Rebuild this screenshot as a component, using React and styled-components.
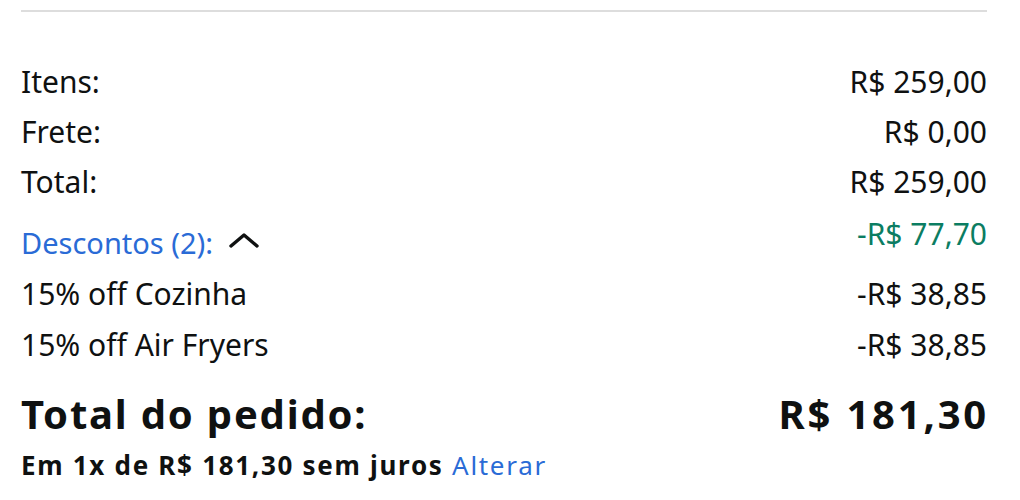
import React from "react";
import styled, { createGlobalStyle } from "styled-components";

const GlobalStyle = createGlobalStyle`
  body {
    margin: 0;
    background: #fff;
    font-family: "Noto Sans", "Open Sans", Arial, sans-serif;
    color: #0f1111;
  }
`;

const Summary = styled.div`
  padding: 10px 33px 0 21px;
`;

const Divider = styled.hr`
  border: 0;
  border-top: 2px solid #dddddd;
  margin: 0 0 45px;
`;

const Row = styled.div`
  display: flex;
  justify-content: space-between;
  align-items: flex-start;
  height: ${({ $h }) => $h || 50}px;
  font-size: 30px;
  line-height: ${({ $h }) => $h || 50}px;
`;

const Label = styled.span`
  display: flex;
  align-items: center;
  padding-top: ${({ $shift }) => $shift || 0}px;
`;

const LinkText = styled.a`
  color: #2a6bd6;
  text-decoration: none;
  cursor: pointer;
`;

const ToggleText = styled(LinkText)`
  font-size: 29px;
  line-height: 50px;
`;

const Value = styled.span`
  color: ${({ $green }) => ($green ? "#0b7d62" : "#0f1111")};
  line-height: ${({ $lh }) => ($lh ? `${$lh}px` : "inherit")};
`;

const Chevron = styled.svg`
  width: 34px;
  height: 20px;
  margin-left: 14px;
  margin-top: -6px;
`;

const GrandRow = styled.div`
  display: flex;
  justify-content: space-between;
  align-items: center;
  margin-top: 19px;
  font-size: 40px;
  font-weight: 700;
  letter-spacing: 1.8px;
  line-height: 50px;
`;

const GrandValue = styled.span`
  letter-spacing: 2.8px;
  margin-right: -2px;
`;

const Installments = styled.div`
  font-size: 26px;
  font-weight: 700;
  letter-spacing: 1.7px;
  line-height: 52px;
`;

const ChangeLink = styled(LinkText)`
  font-weight: 400;
`;

const lines = [
  ["Itens:", "R$ 259,00"],
  ["Frete:", "R$ 0,00"],
  ["Total:", "R$ 259,00"],
];

const discounts = [
  ["15% off Cozinha", "-R$ 38,85"],
  ["15% off Air Fryers", "-R$ 38,85"],
];

export default function App() {
  return (
    <>
      <GlobalStyle />
      <Summary>
        <Divider />
        {lines.map(([label, value]) => (
          <Row key={label}>
            <Label>{label}</Label>
            <Value>{value}</Value>
          </Row>
        ))}
        <Row $h={61}>
          <Label $shift={11}>
            <ToggleText>Descontos (2):</ToggleText>
            <Chevron viewBox="0 0 34 20">
              <path d="M4 16 L17 5 L30 16" fill="none" stroke="#0f1111" strokeWidth="3.4" strokeLinecap="round" strokeLinejoin="round" />
            </Chevron>
          </Label>
          <Value $green $lh={54}>-R$ 77,70</Value>
        </Row>
        {discounts.map(([label, value]) => (
          <Row key={label} $h={51}>
            <Label>{label}</Label>
            <Value>{value}</Value>
          </Row>
        ))}
        <GrandRow>
          <span>Total do pedido:</span>
          <GrandValue>R$ 181,30</GrandValue>
        </GrandRow>
        <Installments>
          Em 1x de R$ 181,30 sem juros <ChangeLink>Alterar</ChangeLink>
        </Installments>
      </Summary>
    </>
  );
}
